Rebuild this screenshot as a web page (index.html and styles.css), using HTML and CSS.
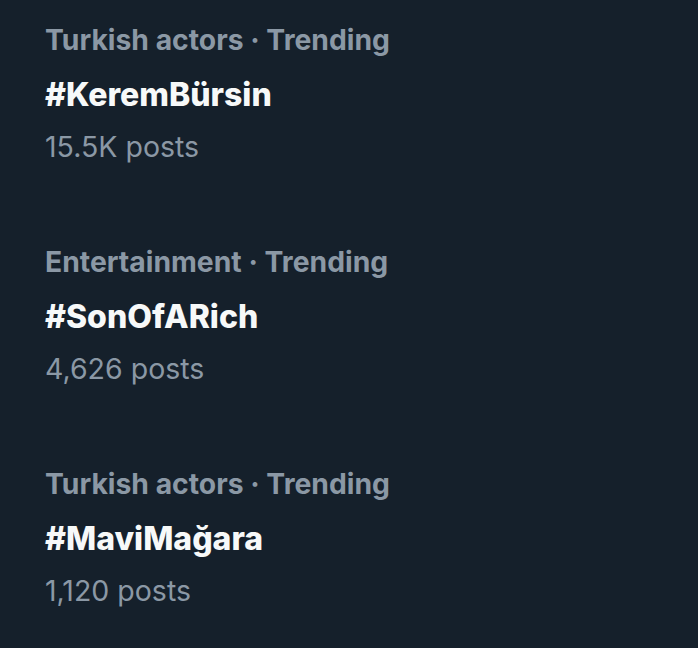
FILE: index.html
```html
<!DOCTYPE html>
<html>
<head>
<meta charset="utf-8">
<link rel="stylesheet" href="styles.css">
</head>
<body>
<div class="trends">
  <div class="trend">
    <div class="meta">Turkish actors · Trending</div>
    <div class="tag">#KeremBürsin</div>
    <div class="count">15.5K posts</div>
  </div>
  <div class="trend">
    <div class="meta">Entertainment · Trending</div>
    <div class="tag">#SonOfARich</div>
    <div class="count">4,626 posts</div>
  </div>
  <div class="trend">
    <div class="meta">Turkish actors · Trending</div>
    <div class="tag">#MaviMağara</div>
    <div class="count">1,120 posts</div>
  </div>
</div>
</body>
</html>
```
FILE: styles.css
```css
html, body {
  margin: 0;
  padding: 0;
  background: #15202b;
  height: 100%;
}
body {
  font-family: Inter, Roboto, sans-serif;
  line-height: 40px;
}
.trends {
  display: flex;
  flex-direction: column;
  gap: 75px;
  padding: 19.5px 0 0 45px;
}
.trend {
  display: flex;
  flex-direction: column;
}
.meta {
  color: #8b98a5;
  font-size: 28.3px;
  font-weight: 700;
}
.tag {
  color: #f7f9f9;
  font-size: 32px;
  font-weight: 800;
  margin-top: 15px;
}
.count {
  color: #8b98a5;
  font-size: 28.5px;
  font-weight: 400;
  margin-top: 12px;
}
```
